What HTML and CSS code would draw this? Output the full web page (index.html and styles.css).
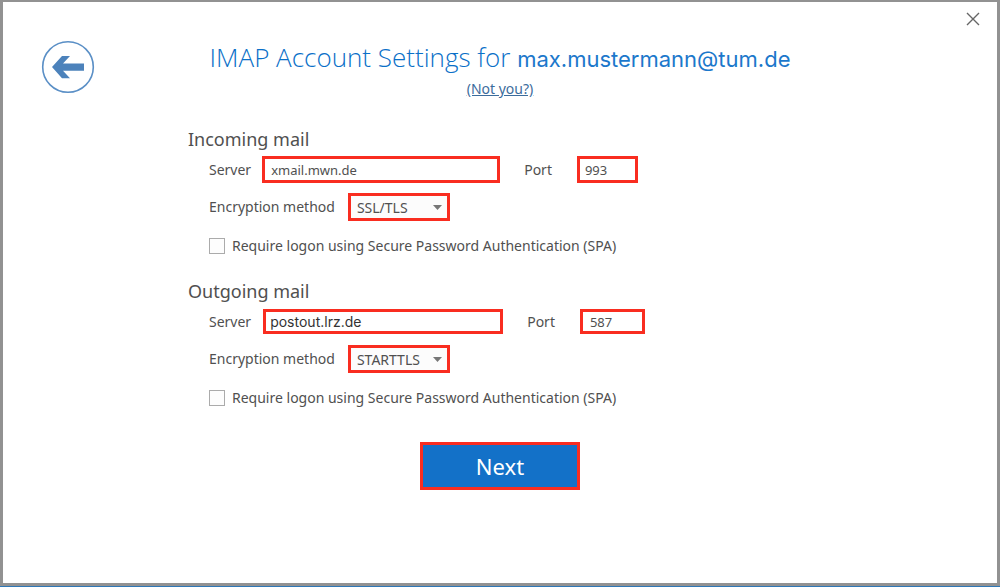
FILE: index.html
```html
<!DOCTYPE html>
<html lang="en">
<head>
<meta charset="utf-8">
<title>IMAP Account Settings</title>
<link rel="stylesheet" href="styles.css">
</head>
<body>
<main class="dialog">
  <button class="back" type="button" aria-label="Back">
    <svg viewBox="0 0 54 54" width="54" height="54" aria-hidden="true">
      <circle cx="27" cy="27" r="25.3" fill="none" stroke="#5a8fc6" stroke-width="1.6"/>
      <path d="M11 27 21 16h8l-7 7.500h21v7.300H22l7 7.400h-8z" fill="#4c82bb"/>
    </svg>
  </button>
  <button class="close" type="button" aria-label="Close">
    <svg viewBox="0 0 14 14" width="14" height="14" aria-hidden="true">
      <path d="M1 1l12 12M13 1 1 13" fill="none" stroke="#666" stroke-width="1.4"/>
    </svg>
  </button>
  <header class="header">
    <h1 class="title">IMAP Account Settings for <span class="email">max.mustermann@tum.de</span></h1>
    <a class="switch" href="#">(Not you?)</a>
  </header>
  <form class="form">
    <section class="group">
      <h2 class="group-title">Incoming mail</h2>
      <div class="row">
        <label class="label" for="in-server">Server</label>
        <input class="field server server-in" id="in-server" type="text" value="xmail.mwn.de">
        <label class="label port-label" for="in-port">Port</label>
        <input class="field port port-in" id="in-port" type="text" value="993">
      </div>
      <div class="row">
        <label class="label" for="in-enc">Encryption method</label>
        <select class="field select" id="in-enc"><option>SSL/TLS</option><option>STARTTLS</option></select>
      </div>
      <div class="row check-row">
        <input class="check" id="in-spa" type="checkbox">
        <label class="label" for="in-spa">Require logon using Secure Password Authentication (SPA)</label>
      </div>
    </section>
    <section class="group">
      <h2 class="group-title">Outgoing mail</h2>
      <div class="row">
        <label class="label" for="out-server">Server</label>
        <input class="field server server-out" id="out-server" type="text" value="postout.lrz.de">
        <label class="label port-label" for="out-port">Port</label>
        <input class="field port port-out" id="out-port" type="text" value="587">
      </div>
      <div class="row">
        <label class="label" for="out-enc">Encryption method</label>
        <select class="field select" id="out-enc"><option>STARTTLS</option><option>SSL/TLS</option></select>
      </div>
      <div class="row check-row">
        <input class="check" id="out-spa" type="checkbox">
        <label class="label" for="out-spa">Require logon using Secure Password Authentication (SPA)</label>
      </div>
    </section>
    <button class="next" type="button">Next</button>
  </form>
</main>
</body>
</html>
```
FILE: styles.css
```css
* {
  box-sizing: border-box;
}

body {
  margin: 0;
  background: #2f78b7;
  font-family: "Noto Sans", "Open Sans", sans-serif;
  font-size: 14px;
  line-height: 20px;
  color: #505050;
}

.dialog {
  position: relative;
  min-height: calc(100vh - 1px);
  margin-bottom: 1px;
  padding: 37px 24px 40px;
  border: 3px solid #929292;
  border-top-width: 2px;
  background: #fff;
}

button {
  padding: 0;
  border: 0;
  background: none;
  font-family: inherit;
}

button svg {
  display: block;
}

.back {
  position: absolute;
  top: 38px;
  left: 38px;
}

.close {
  position: absolute;
  top: 10px;
  right: 17px;
}

.header {
  display: flex;
  flex-direction: column;
  align-items: center;
  margin-bottom: 28px;
}

.title {
  margin: 0 0 2px;
  font-family: "Open Sans", sans-serif;
  font-size: 26px;
  font-weight: 300;
  line-height: 36px;
  color: #0a70c8;
}

.email {
  font-family: Inter, sans-serif;
  font-size: 22px;
  font-weight: 400;
  color: #1c78cb;
}

.switch {
  color: #3c6c9c;
}

.form {
  width: 100%;
  max-width: 624px;
  margin: 0 auto;
}

.group {
  margin-bottom: 23px;
}

.group-title {
  margin: 0 0 5px;
  font-size: 18px;
  font-weight: 400;
  line-height: 24px;
}

.row {
  display: flex;
  align-items: center;
  min-height: 27px;
  margin-bottom: 10px;
  padding-left: 21px;
}

.check-row {
  min-height: 20px;
  margin: 15px 0 0;
}

.field {
  height: 27px;
  border: 3px solid #f92d20;
  border-radius: 0;
  background: #fff;
  font-family: inherit;
  font-size: 13px;
  color: #505050;
}

.server {
  width: 238px;
  margin-left: 11px;
  padding: 0 6px;
}

.server-out {
  width: 240px;
  height: 25px;
  margin-left: 12px;
  padding: 0 4px;
  font-family: Inter, sans-serif;
  font-size: 14px;
  color: #333;
}

.port-label {
  margin-left: 24px;
}

.port {
  width: 61px;
  margin-left: 25px;
  padding: 0 5px;
}

.port-out {
  width: 65px;
  height: 25px;
  padding: 0 7px;
}

.select {
  width: 102px;
  height: 28px;
  margin-left: 13px;
  padding: 0 6px;
  appearance: none;
  background: #fcfcfc url("data:image/svg+xml,%3Csvg xmlns='http://www.w3.org/2000/svg' width='9' height='5'%3E%3Cpath d='M0 0h9L4.500 5z' fill='%23777'/%3E%3C/svg%3E") no-repeat right 5px center;
  font-size: 14px;
}

.check {
  width: 16px;
  height: 16px;
  margin: 0 7px 0 0;
  appearance: none;
  border: 1px solid #ababab;
  background: #fdfdfd;
}

.check:checked {
  background: #1371c8;
}

.next {
  display: block;
  width: 160px;
  height: 48px;
  margin: 34px auto 0;
  border: 3px solid #f92d20;
  background: #1371c8;
  font-size: 22px;
  color: #fff;
}
```
